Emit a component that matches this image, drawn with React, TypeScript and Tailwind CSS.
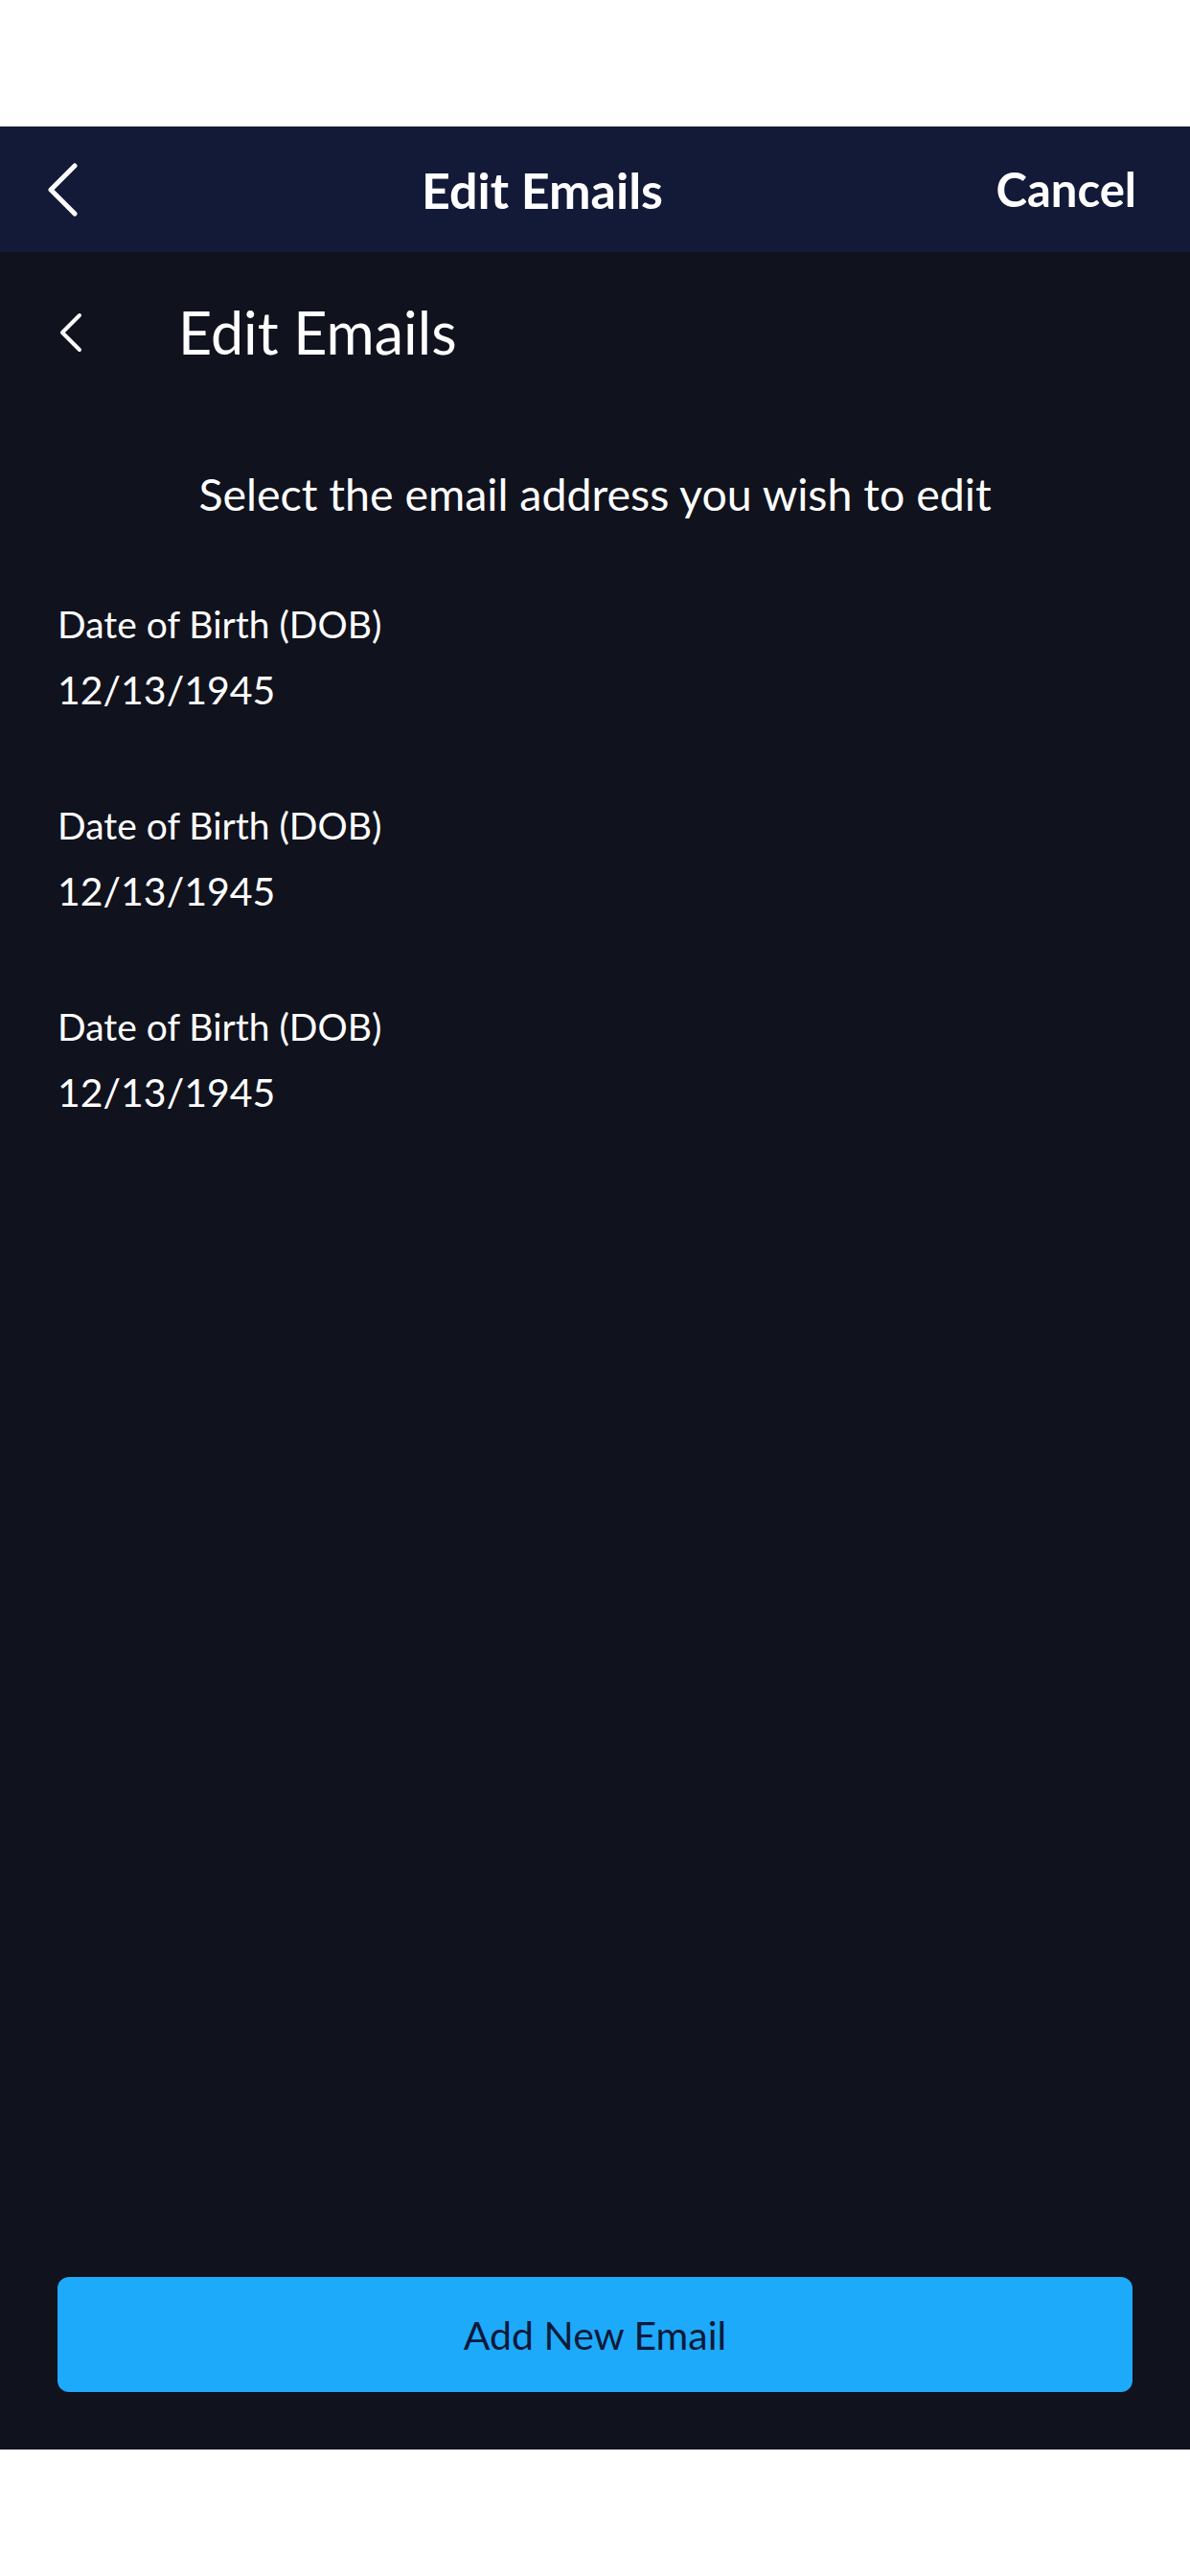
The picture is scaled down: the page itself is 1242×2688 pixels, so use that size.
const items = [
  { label: 'Date of Birth (DOB)', value: '12/13/1945' },
  { label: 'Date of Birth (DOB)', value: '12/13/1945' },
  { label: 'Date of Birth (DOB)', value: '12/13/1945' },
];

export default function App() {
  return (
    <div className="flex h-[2688px] w-[1242px] flex-col bg-white font-['Lato',sans-serif] text-white">
      {/* status area */}
      <div className="h-[132px] shrink-0 bg-white" />

      {/* Top bar */}
      <div className="flex h-[131px] shrink-0 items-center bg-[#131a38] pl-[48px] pr-[56px]">
        <svg className="h-[56px] w-[34px]" viewBox="0 0 34 56" fill="none">
          <path d="M30 3 L5 28 L30 53" stroke="white" strokeWidth={5} strokeLinecap="round" strokeLinejoin="round" />
        </svg>
        <p className="ml-[358px] text-[52px] font-bold leading-none">Edit Emails</p>
        <button className="ml-auto text-[49px] font-bold leading-none">Cancel</button>
      </div>

      {/* Body */}
      <div className="flex flex-1 flex-col bg-[#10121d] px-[60px] pb-[60px]">
        <div className="mt-[53px] flex items-center">
          <svg className="h-[42px] w-[26px]" viewBox="0 0 26 42" fill="none">
            <path d="M23 3 L5 21 L23 39" stroke="white" strokeWidth={4} strokeLinecap="round" strokeLinejoin="round" />
          </svg>
          <h1 className="ml-[100px] text-[61px] leading-none">Edit Emails</h1>
        </div>

        <p className="mt-[115px] text-center text-[46.5px] leading-none">Select the email address you wish to edit</p>

        <div className="mt-[93px] flex flex-col gap-[102px]">
          {items.map((item, i) => (
            <div key={i} className="flex flex-col gap-[28px]">
              <p className="text-[39px] leading-none">{item.label}</p>
              <p className="text-[41px] leading-none">{item.value}</p>
            </div>
          ))}
        </div>

        <button className="mt-auto flex h-[120px] w-full items-center justify-center rounded-[12px] bg-[#1eaafb] text-[41px] leading-none text-[#0e1a3a]">
          Add New Email
        </button>
      </div>

      <div className="h-[132px] shrink-0 bg-white" />
    </div>
  );
}
